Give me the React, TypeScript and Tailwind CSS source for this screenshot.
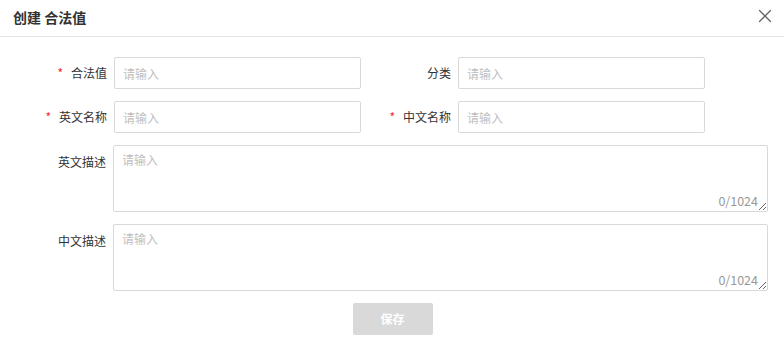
import { X } from 'lucide-react';

const font = { fontFamily: '"Noto Sans CJK SC", "Noto Sans", sans-serif' };

function Label({ text, required, width }: { text: string; required?: boolean; width: string }) {
  return (
    <label className={`${width} shrink-0 flex items-center justify-end pr-[7px] text-[12px] text-[#333]`}>
      {required && <span className="text-[#f5222d] mr-[8px] text-[12px] leading-none">*</span>}
      <span>{text}</span>
    </label>
  );
}

function TextInput() {
  return (
    <input
      className="w-[247px] h-[32px] border border-[#d9d9d9] rounded-[2px] px-[8px] text-[12px] text-[#333] placeholder:text-[#bfbfbf] outline-none bg-white"
      placeholder="请输入"
    />
  );
}

function TextArea() {
  return (
    <div className="relative w-[655px]">
      <textarea
        className="block w-full h-[67px] border border-[#d9d9d9] rounded-[2px] px-[8px] py-[5px] text-[12px] text-[#333] placeholder:text-[#bfbfbf] outline-none bg-white"
        placeholder="请输入"
      />
      <span className="absolute right-[10px] bottom-[5px] text-[12.5px] text-[#999] leading-none">0/1024</span>
    </div>
  );
}

export default function App() {
  return (
    <div className="w-[784px] h-[345px] bg-white overflow-hidden" style={font}>
      {/* Header */}
      <div className="h-[37px] flex items-center justify-between pl-[13px] pr-[8px] border-b border-[#e5e5e5]">
        <h2 className="text-[14px] font-bold text-[#333] -mt-[2px]">创建 合法值</h2>
        <X className="h-[22px] w-[22px] text-[#666] -mt-[5px]" strokeWidth={1.4} />
      </div>

      {/* Form */}
      <div className="pt-[20px] flex flex-col gap-[12px]">
        <div className="flex items-center">
          <Label text="合法值" required width="w-[114px]" />
          <TextInput />
          <Label text="分类" width="w-[97px]" />
          <TextInput />
        </div>
        <div className="flex items-center">
          <Label text="英文名称" required width="w-[114px]" />
          <TextInput />
          <Label text="中文名称" required width="w-[97px]" />
          <TextInput />
        </div>
        <div className="flex items-start">
          <label className="w-[113px] shrink-0 pr-[7px] pt-[8px] text-right text-[12px] text-[#333]">英文描述</label>
          <TextArea />
        </div>
        <div className="flex items-start">
          <label className="w-[113px] shrink-0 pr-[7px] pt-[8px] text-right text-[12px] text-[#333]">中文描述</label>
          <TextArea />
        </div>
        <div className="flex justify-center">
          <button
            className="w-[80px] h-[32px] bg-[#d9d9d9] rounded-[2px] text-white text-[12px] font-bold ml-[1px]"
            disabled
          >
            保存
          </button>
        </div>
      </div>
    </div>
  );
}
